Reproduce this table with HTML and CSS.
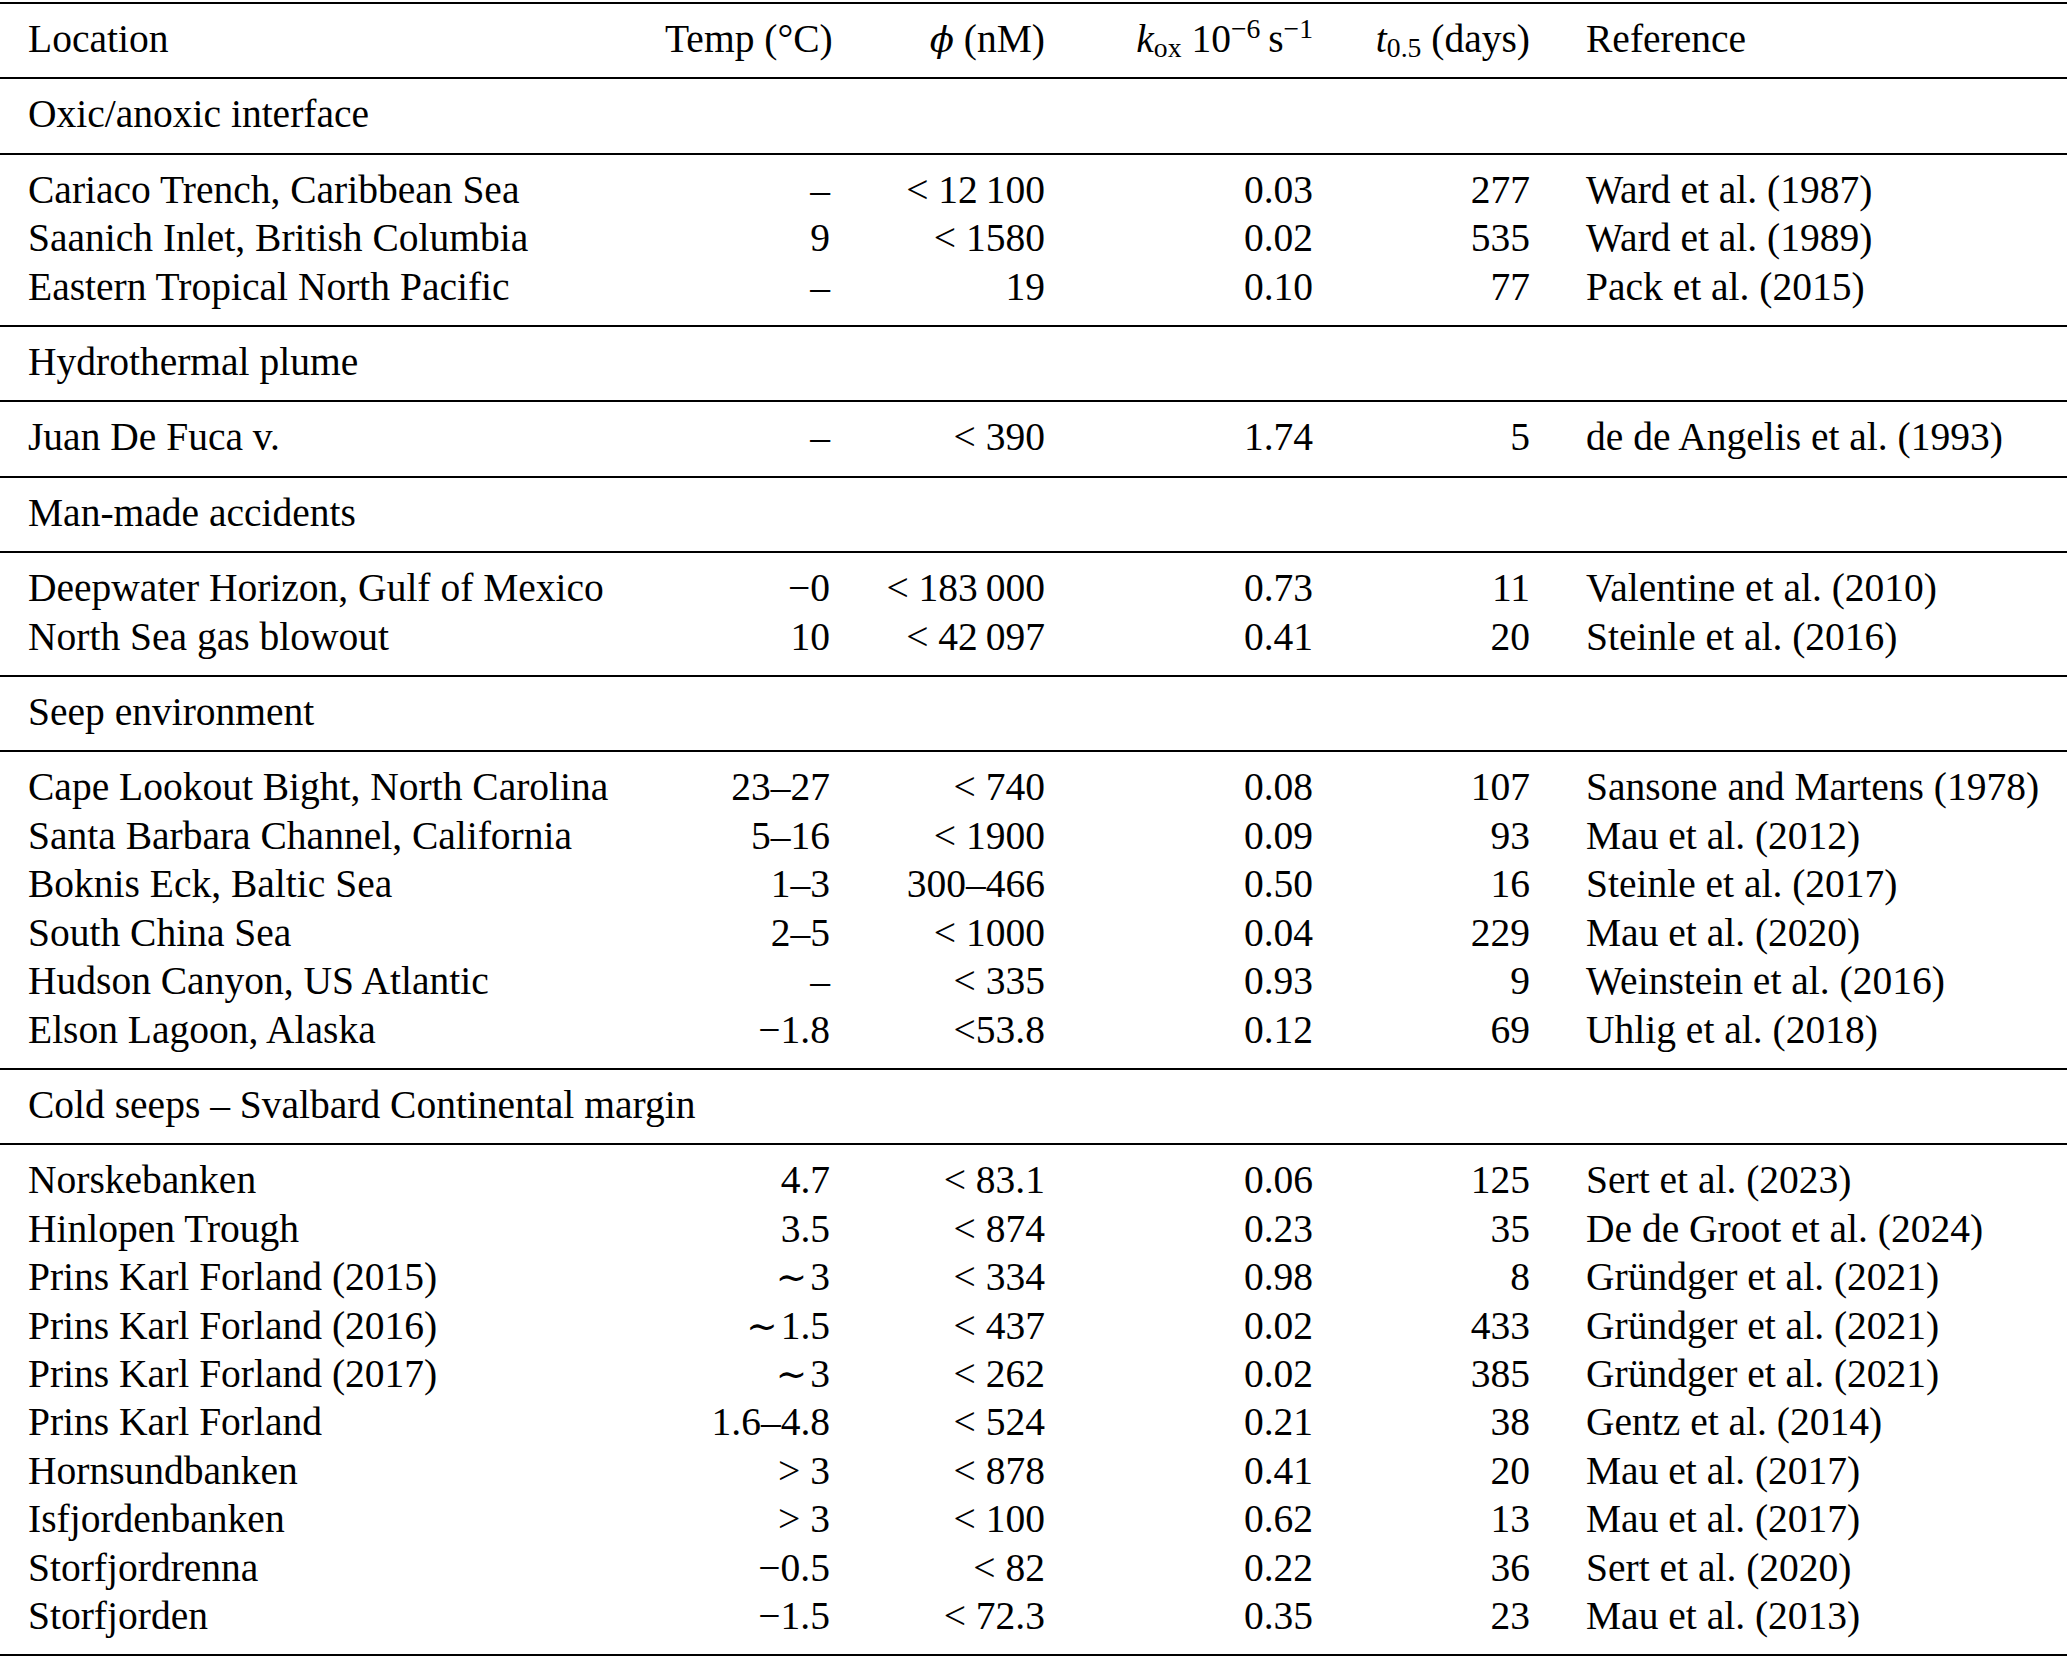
FILE: index.html
```html
<!DOCTYPE html>
<html lang="en">
<head>
<meta charset="utf-8">
<title>Methane oxidation rates</title>
<link rel="stylesheet" href="styles.css">
</head>
<body>
<table class="data">
  <colgroup>
    <col class="c-loc"><col class="c-temp"><col class="c-phi"><col class="c-kox"><col class="c-t"><col class="c-ref">
  </colgroup>
  <thead>
    <tr>
      <th class="l">Location</th>
      <th class="r">Temp (°C)</th>
      <th class="r"><i class="phi">ϕ</i> (nM)</th>
      <th class="r"><i>k</i><sub>ox</sub> 10<sup>−6</sup>&#8201;s<sup>−1</sup></th>
      <th class="r"><i>t</i><sub>0.5</sub> (days)</th>
      <th class="l">Reference</th>
    </tr>
  </thead>
  <tbody class="section"><tr><td colspan="6">Oxic/anoxic interface</td></tr></tbody>
  <tbody>
    <tr><td>Cariaco Trench, Caribbean Sea</td><td>–</td><td>&lt; 12&#8201;100</td><td>0.03</td><td>277</td><td>Ward et al. (1987)</td></tr>
    <tr><td>Saanich Inlet, British Columbia</td><td>9</td><td>&lt; 1580</td><td>0.02</td><td>535</td><td>Ward et al. (1989)</td></tr>
    <tr><td>Eastern Tropical North Pacific</td><td>–</td><td>19</td><td>0.10</td><td>77</td><td>Pack et al. (2015)</td></tr>
  </tbody>
  <tbody class="section"><tr><td colspan="6">Hydrothermal plume</td></tr></tbody>
  <tbody>
    <tr><td>Juan De Fuca v.</td><td>–</td><td>&lt; 390</td><td>1.74</td><td>5</td><td>de de Angelis et al. (1993)</td></tr>
  </tbody>
  <tbody class="section"><tr><td colspan="6">Man-made accidents</td></tr></tbody>
  <tbody>
    <tr><td>Deepwater Horizon, Gulf of Mexico</td><td>−0</td><td>&lt; 183&#8201;000</td><td>0.73</td><td>11</td><td>Valentine et al. (2010)</td></tr>
    <tr><td>North Sea gas blowout</td><td>10</td><td>&lt; 42&#8201;097</td><td>0.41</td><td>20</td><td>Steinle et al. (2016)</td></tr>
  </tbody>
  <tbody class="section"><tr><td colspan="6">Seep environment</td></tr></tbody>
  <tbody>
    <tr><td>Cape Lookout Bight, North Carolina</td><td>23–27</td><td>&lt; 740</td><td>0.08</td><td>107</td><td>Sansone and Martens (1978)</td></tr>
    <tr><td>Santa Barbara Channel, California</td><td>5–16</td><td>&lt; 1900</td><td>0.09</td><td>93</td><td>Mau et al. (2012)</td></tr>
    <tr><td>Boknis Eck, Baltic Sea</td><td>1–3</td><td>300–466</td><td>0.50</td><td>16</td><td>Steinle et al. (2017)</td></tr>
    <tr><td>South China Sea</td><td>2–5</td><td>&lt; 1000</td><td>0.04</td><td>229</td><td>Mau et al. (2020)</td></tr>
    <tr><td>Hudson Canyon, US Atlantic</td><td>–</td><td>&lt; 335</td><td>0.93</td><td>9</td><td>Weinstein et al. (2016)</td></tr>
    <tr><td>Elson Lagoon, Alaska</td><td>−1.8</td><td>&lt;53.8</td><td>0.12</td><td>69</td><td>Uhlig et al. (2018)</td></tr>
  </tbody>
  <tbody class="section"><tr><td colspan="6">Cold seeps – Svalbard Continental margin</td></tr></tbody>
  <tbody class="last">
    <tr><td>Norskebanken</td><td>4.7</td><td>&lt; 83.1</td><td>0.06</td><td>125</td><td>Sert et al. (2023)</td></tr>
    <tr><td>Hinlopen Trough</td><td>3.5</td><td>&lt; 874</td><td>0.23</td><td>35</td><td>De de Groot et al. (2024)</td></tr>
    <tr><td>Prins Karl Forland (2015)</td><td><span class="sim">∼</span>3</td><td>&lt; 334</td><td>0.98</td><td>8</td><td>Gründger et al. (2021)</td></tr>
    <tr><td>Prins Karl Forland (2016)</td><td><span class="sim">∼</span>1.5</td><td>&lt; 437</td><td>0.02</td><td>433</td><td>Gründger et al. (2021)</td></tr>
    <tr><td>Prins Karl Forland (2017)</td><td><span class="sim">∼</span>3</td><td>&lt; 262</td><td>0.02</td><td>385</td><td>Gründger et al. (2021)</td></tr>
    <tr><td>Prins Karl Forland</td><td>1.6–4.8</td><td>&lt; 524</td><td>0.21</td><td>38</td><td>Gentz et al. (2014)</td></tr>
    <tr><td>Hornsundbanken</td><td>&gt; 3</td><td>&lt; 878</td><td>0.41</td><td>20</td><td>Mau et al. (2017)</td></tr>
    <tr><td>Isfjordenbanken</td><td>&gt; 3</td><td>&lt; 100</td><td>0.62</td><td>13</td><td>Mau et al. (2017)</td></tr>
    <tr><td>Storfjordrenna</td><td>−0.5</td><td>&lt; 82</td><td>0.22</td><td>36</td><td>Sert et al. (2020)</td></tr>
    <tr><td>Storfjorden</td><td>−1.5</td><td>&lt; 72.3</td><td>0.35</td><td>23</td><td>Mau et al. (2013)</td></tr>
  </tbody>
</table>
</body>
</html>
```

FILE: styles.css
```css
html, body {
  margin: 0;
  padding: 0;
  background: #ffffff;
}

body {
  font-family: "Liberation Serif", "Times New Roman", "DejaVu Serif", serif;
  font-size: 39.5px;
  color: #000000;
}

.data {
  width: 2067px;
  margin-top: 2px;
  table-layout: fixed;
  border-collapse: separate;
  border-spacing: 0;
}

.c-loc { width: 637px; }
.c-temp { width: 221px; }
.c-phi { width: 215px; }
.c-kox { width: 268px; }
.c-t { width: 217px; }
.c-ref { width: 509px; }

.data th,
.data td {
  padding: 0 28px;
  line-height: 48.4px;
  height: 48.4px;
  font-weight: normal;
  white-space: nowrap;
  text-align: right;
  vertical-align: top;
}

.data th.l,
.data td:first-child,
.data td:last-child {
  text-align: left;
}

.data thead th {
  border-top: 2px solid #000;
  border-bottom: 2px solid #000;
  padding-top: 11px;
  padding-bottom: 14px;
}

.data tbody tr:first-child td {
  padding-top: 11px;
}

.data tbody tr:last-child td {
  padding-bottom: 14px;
  border-bottom: 2px solid #000;
}

.data tbody.section td {
  text-align: left;
}

sup, sub {
  font-size: 0.7em;
  line-height: 0;
}

sup {
  vertical-align: 0.5em;
}

sub {
  vertical-align: -0.18em;
}

.phi {
  font-family: "DejaVu Serif", serif;
  font-size: 0.9em;
  line-height: 0;
}

.sim {
  font-family: "DejaVu Serif", serif;
  font-size: 0.95em;
  line-height: 0;
  margin-right: 0.08em;
}
```
